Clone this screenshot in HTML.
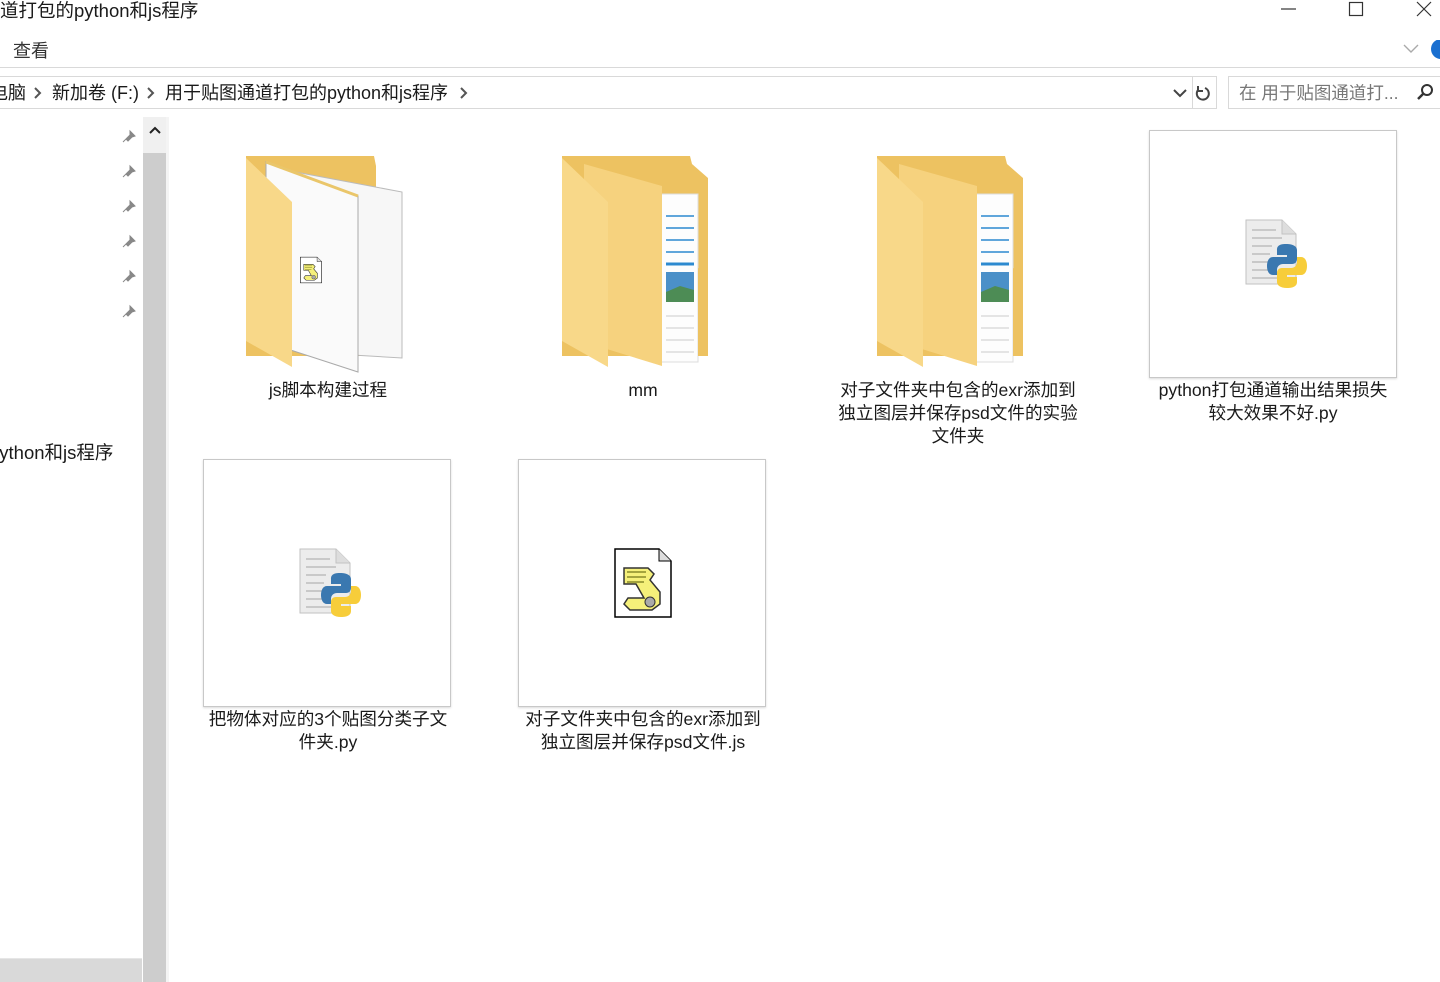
<!DOCTYPE html>
<html><head><meta charset="utf-8"><style>
*{margin:0;padding:0;box-sizing:border-box}
body{width:1440px;height:982px;overflow:hidden;background:#fff;font-family:"Liberation Sans","Noto Sans CJK SC",sans-serif;color:#1a1a1a;position:relative}
.a{position:absolute}
.lbl{position:absolute;width:246px;text-align:center;font-size:17.6px;line-height:23px;color:#1a1a1a}
.thumb{position:absolute;width:248px;height:248px;border:1px solid #c8c8c8;background:#fff;box-shadow:0 1px 2px rgba(0,0,0,.15)}
.ch{display:inline-block;color:#555;font-weight:bold;transform:scaleY(1.1)}
</style></head><body>
<svg width="0" height="0" style="position:absolute">
<defs>
<symbol id="py" viewBox="0 0 66 70">
<path d="M4 2h36l14 14v50H4z" fill="#ececec" stroke="#c2c2c2"/>
<path d="M40 2v14h14" fill="#ddd" stroke="#c2c2c2"/>
<g stroke="#bdbdbd" stroke-width="1.5"><line x1="10" y1="12" x2="34" y2="12"/><line x1="10" y1="20" x2="40" y2="20"/><line x1="10" y1="28" x2="30" y2="28"/><line x1="10" y1="36" x2="28" y2="36"/><line x1="10" y1="44" x2="26" y2="44"/><line x1="10" y1="52" x2="28" y2="52"/><line x1="10" y1="60" x2="36" y2="60"/></g>
<path d="M44 26c-8 0-9 3-9 6v5h10v2H31c-4 0-6 4-6 9s2 9 6 9h4v-5c0-4 3-6 6-6h9c3 0 5-2 5-5v-9c0-3-3-6-11-6z" fill="#3a78b0"/>
<path d="M45 70c8 0 10-3 10-6v-5H45v-2h14c4 0 6-4 6-9s-2-9-6-9h-4v5c0 4-3 6-6 6h-9c-3 0-5 2-5 5v9c0 3 3 6 10 6z" fill="#f7cd3a"/>
</symbol>
<symbol id="js" viewBox="0 0 58 70">
<path d="M1 1h44l12 12v56H1z" fill="#fff" stroke="#000" stroke-width="1.5"/>
<path d="M45 1v12h12" fill="#ddd" stroke="#000"/>
<path d="M10 20h24l6 6-4 6 10 12v12l-8 6H16l-6-6 4-6h16l-8-14H10z" fill="#f5f07a" stroke="#333" stroke-width="1.5"/>
<g stroke="#8a8a2a" stroke-width="1.5"><line x1="13" y1="24" x2="32" y2="24"/><line x1="13" y1="29" x2="32" y2="29"/><line x1="13" y1="34" x2="30" y2="34"/></g>
<circle cx="36" cy="54" r="5" fill="#aaa" stroke="#333"/>
</symbol>
<symbol id="fold" viewBox="0 0 160 220">
<path d="M0 0h128l2 8 16 14v178H0z" fill="#edc261"/>
<rect x="98" y="38" width="38" height="168" fill="#fdfdfd" stroke="#ddd"/>
<g stroke="#2d8ad0" stroke-width="1.5"><line x1="104" y1="60" x2="132" y2="60"/><line x1="104" y1="72" x2="132" y2="72"/><line x1="104" y1="84" x2="132" y2="84"/><line x1="104" y1="96" x2="132" y2="96"/><line x1="104" y1="108" x2="132" y2="108" stroke-width="3"/></g>
<rect x="104" y="116" width="28" height="30" fill="#4b90c8"/><path d="M104 136l14-6 14 4v12h-28z" fill="#4d8c55"/>
<g stroke="#ccc"><line x1="104" y1="160" x2="132" y2="160"/><line x1="104" y1="172" x2="132" y2="172"/><line x1="104" y1="184" x2="132" y2="184"/><line x1="104" y1="196" x2="132" y2="196"/></g>
<path d="M22 8l78 22v180l-78-24z" fill="#f6d27e"/>
<path d="M0 2l46 44v165l-46-26z" fill="#f8d889"/>
<path d="M146 120v80h-10v-88z" fill="#edc261"/>
</symbol>
</defs>
</svg>

<div class="a" style="left:0;top:-3px;font-size:18.5px;color:#1a1a1a">道打包的python和js程序</div>
<svg class="a" style="left:1280px;top:0" width="160" height="22"><line x1="1" y1="9" x2="16" y2="9" stroke="#333" stroke-width="1.2"/><rect x="69.5" y="2.5" width="13" height="13" fill="none" stroke="#333" stroke-width="1.2"/><path d="M137 2l14 14M151 2l-14 14" stroke="#333" stroke-width="1.2"/></svg>
<div class="a" style="left:13px;top:37px;font-size:18px;color:#333">查看</div>
<svg class="a" style="left:1400px;top:40px" width="40" height="20"><path d="M4 5l7 7 7-7" fill="none" stroke="#aaa" stroke-width="1.4"/><circle cx="41" cy="9" r="10" fill="#1a6fd0"/></svg>
<div class="a" style="left:0;top:67px;width:1440px;height:1px;background:#d9d9d9"></div>
<div class="a" style="left:0;top:76px;width:1217px;height:33px;border:1px solid #d9d9d9;border-left:none"></div>
<div class="a" style="left:1192px;top:76px;width:1px;height:33px;background:#d9d9d9"></div>
<div class="a" style="left:1228px;top:76px;width:220px;height:33px;border:1px solid #d9d9d9"></div>
<div class="a" style="left:-10px;top:79px;font-size:18px;color:#1a1a1a">电脑</div>
<div class="a" style="left:52px;top:79px;font-size:18px;color:#1a1a1a">新加卷 (F:)</div>
<div class="a" style="left:165px;top:79px;font-size:18px;color:#1a1a1a">用于贴图通道打包的python和js程序</div>
<svg class="a" style="left:30px;top:85px" width="440" height="16"><g fill="none" stroke="#555" stroke-width="2"><path d="M5 3l5 5-5 5"/><path d="M118 3l5 5-5 5"/><path d="M431 3l5 5-5 5"/></g></svg>
<svg class="a" style="left:1170px;top:84px" width="44" height="18"><path d="M4 6l6 6 6-6" fill="none" stroke="#444" stroke-width="2"/><path d="M35 4a6 6 0 1 1-7 2M28 2v5h5" fill="none" stroke="#444" stroke-width="2"/></svg>
<div class="a" style="left:1239px;top:80px;font-size:17.5px;color:#777">在 用于贴图通道打...</div>
<svg class="a" style="left:1416px;top:83px" width="18" height="18"><circle cx="11" cy="7" r="5" fill="none" stroke="#333" stroke-width="2"/><line x1="7" y1="11" x2="2" y2="16" stroke="#333" stroke-width="2.5"/></svg>

<svg class="a" style="left:121px;top:126px" width="18" height="200">
<g fill="#888" stroke="#888"><path d="M9 5l5 5-3 1-4 4-2-2 4-4zM2 16l4-4"/></g>
<g fill="#888" stroke="#888" transform="translate(0,35)"><path d="M9 5l5 5-3 1-4 4-2-2 4-4zM2 16l4-4"/></g>
<g fill="#888" stroke="#888" transform="translate(0,70)"><path d="M9 5l5 5-3 1-4 4-2-2 4-4zM2 16l4-4"/></g>
<g fill="#888" stroke="#888" transform="translate(0,105)"><path d="M9 5l5 5-3 1-4 4-2-2 4-4zM2 16l4-4"/></g>
<g fill="#888" stroke="#888" transform="translate(0,140)"><path d="M9 5l5 5-3 1-4 4-2-2 4-4zM2 16l4-4"/></g>
<g fill="#888" stroke="#888" transform="translate(0,175)"><path d="M9 5l5 5-3 1-4 4-2-2 4-4zM2 16l4-4"/></g></svg>
<div class="a" style="left:-11px;top:439px;font-size:18.5px">python和js程序</div>
<div class="a" style="left:143px;top:117px;width:23px;height:36px;background:#f0f0f0"></div>
<svg class="a" style="left:147px;top:124px" width="16" height="14"><path d="M3 9l5-5 5 5" fill="none" stroke="#222" stroke-width="2"/></svg>
<div class="a" style="left:143px;top:153px;width:23px;height:829px;background:#cdcdcd"></div>
<div class="a" style="left:166px;top:117px;width:3px;height:865px;background:#f4f4f4"></div>
<div class="a" style="left:0;top:958px;width:142px;height:24px;background:#d9d9d9;border-top:1px solid #e6e6e6"></div>

<svg class="a" style="left:246px;top:156px" width="180" height="220" viewBox="0 0 180 220">
<path d="M0 0h128l2 10v190H0z" fill="#edc261"/>
<path d="M28 12l128 24v166l-100 -6z" fill="#f7f7f7" stroke="#bbb"/>
<path d="M20 6l92 34v176l-92-30z" fill="#fafafa" stroke="#aaa"/>
<path d="M20 6l92 34" stroke="#eac66a" stroke-width="3"/>
<path d="M0 2l46 44v165l-46-26z" fill="#f8d889"/>
<use href="#js" x="54" y="88" width="22" height="52"/>
</svg>
<svg class="a" style="left:562px;top:156px" width="160" height="220"><use href="#fold" width="160" height="220"/></svg>
<svg class="a" style="left:877px;top:156px" width="160" height="220"><use href="#fold" width="160" height="220"/></svg>
<div class="thumb" style="left:1149px;top:130px"></div>
<svg class="a" style="left:1242px;top:218px" width="66" height="70"><use href="#py" width="66" height="70"/></svg>
<div class="thumb" style="left:203px;top:459px"></div>
<svg class="a" style="left:296px;top:547px" width="66" height="70"><use href="#py" width="66" height="70"/></svg>
<div class="thumb" style="left:518px;top:459px"></div>
<svg class="a" style="left:614px;top:548px" width="58" height="70"><use href="#js" width="58" height="70"/></svg>

<div class="lbl" style="left:205px;top:379px">js脚本构建过程</div>
<div class="lbl" style="left:520px;top:379px">mm</div>
<div class="lbl" style="left:835px;top:379px">对子文件夹中包含的exr添加到<br>独立图层并保存psd文件的实验<br>文件夹</div>
<div class="lbl" style="left:1150px;top:379px">python打包通道输出结果损失<br>较大效果不好.py</div>
<div class="lbl" style="left:205px;top:708px">把物体对应的3个贴图分类子文<br>件夹.py</div>
<div class="lbl" style="left:520px;top:708px">对子文件夹中包含的exr添加到<br>独立图层并保存psd文件.js</div>
</body></html>
